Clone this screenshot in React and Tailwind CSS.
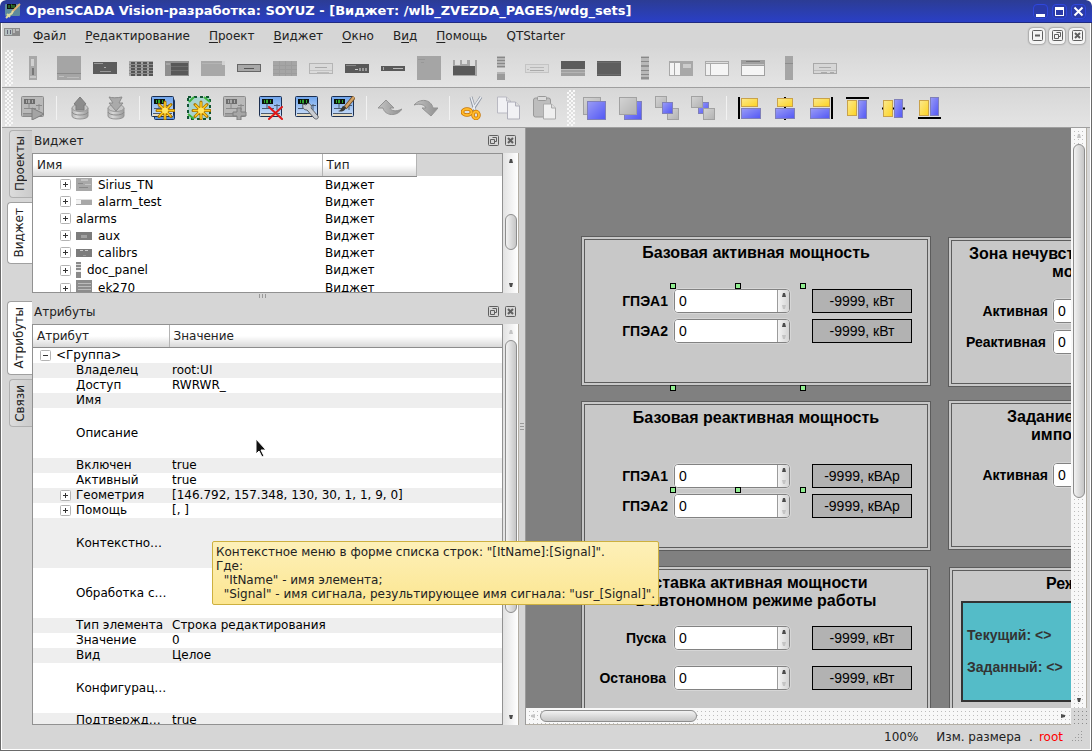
import React from "react";

const menuItems = [
  ["", "Ф", "айл"],
  ["", "Р", "едактирование"],
  ["", "П", "роект"],
  ["", "В", "иджет"],
  ["", "О", "кно"],
  ["В", "и", "д"],
  ["", "П", "омощь"],
  ["QTStarter", "", ""],
];

// Widget library previews, each drawn on a 24x24 grid: [x, y, w, h, colour]
const previews = [
  ["Стойка", [[8, 0, 8, 24, "#a8a8a8"], [10, 3, 3, 7, "#d0d0d0"], [11, 12, 2, 7, "#777"], [9, 20, 6, 2, "#c6c6c6"]]],
  ["Панель", [[0, 0, 24, 24, "#a5a5a5"], [0, 17, 24, 1, "#8a8a8a"], [2, 20, 5, 1, "#c0c0c0"], [10, 21, 12, 1, "#bbb"]]],
  ["Табло", [[0, 6, 24, 12, "#5c5c5c"], [1, 7, 9, 1, "#999"], [11, 11, 2, 1, "#aaa"], [7, 15, 11, 1, "#999"]]],
  ["Таблица", [[0, 5, 24, 15, "#a5a5a5"], [2, 6, 4, 14, "#555"], [8, 6, 4, 14, "#555"], [14, 6, 4, 14, "#555"], [20, 6, 4, 14, "#555"], [0, 8, 24, 1, "#8c8c8c"], [0, 11, 24, 1, "#8c8c8c"], [0, 14, 24, 1, "#8c8c8c"], [0, 17, 24, 1, "#8c8c8c"]]],
  ["Список", [[0, 5, 24, 15, "#8f8f8f"], [6, 7, 17, 12, "#585858"], [1, 7, 4, 2, "#a5a5a5"], [6, 10, 17, 1, "#6c6c6c"], [6, 14, 17, 1, "#6c6c6c"]]],
  ["Лист", [[0, 5, 24, 15, "#a8a8a8"], [21, 5, 3, 4, "#d2d2d2"], [1, 7, 20, 1, "#b4b4b4"]]],
  ["Кнопка", [[0, 8, 24, 8, "#666"], [1, 9, 22, 6, "#a8a8a8"], [7, 12, 10, 1, "#555"]]],
  ["Сетка", [[0, 5, 24, 15, "#a5a5a5"], [0, 9, 24, 1, "#9d9d9d"], [0, 13, 24, 1, "#9d9d9d"], [0, 17, 24, 1, "#9d9d9d"], [6, 5, 1, 15, "#9d9d9d"], [12, 5, 1, 15, "#9d9d9d"], [18, 5, 1, 15, "#9d9d9d"]]],
  ["Диалог", [[0, 7, 24, 11, "#b5b5b5"], [1, 8, 22, 9, "#dadada"], [6, 11, 12, 1, "#aaa"], [1, 14, 22, 1, "#c2c2c2"], [8, 16, 12, 1, "#bbb"]]],
  ["Строка", [[0, 8, 24, 9, "#595959"], [1, 9, 10, 1, "#888"], [10, 13, 3, 1, "#ccc"], [14, 12, 2, 3, "#999"], [17, 12, 2, 3, "#999"], [20, 12, 2, 3, "#999"]]],
  ["Индикатор", [[0, 10, 24, 5, "#595959"], [2, 11, 1, 3, "#aaa"], [12, 12, 10, 1, "#bbb"]]],
  ["Поле", [[0, 0, 24, 24, "#a5a5a5"], [1, 3, 7, 1, "#989898"], [4, 6, 3, 1, "#989898"]]],
  ["Блоки", [[0, 4, 24, 16, "#a5a5a5"], [2, 4, 5, 5, "#dcdcdc"], [9, 4, 5, 4, "#dcdcdc"], [17, 4, 5, 6, "#dcdcdc"], [0, 10, 22, 9, "#595959"]]],
  ["Шкала", [[8, 0, 8, 24, "#b4b4b4"], [8, 1, 8, 1, "#888"], [8, 4, 8, 1, "#888"], [8, 7, 8, 1, "#888"], [8, 10, 8, 1, "#888"], [8, 12, 8, 4, "#ddd"], [8, 18, 8, 6, "#9a9a9a"]]],
  ["Подпись", [[0, 8, 24, 9, "#c4c4c4"], [1, 9, 22, 7, "#dadada"], [5, 11, 14, 1, "#b8b8b8"], [5, 14, 14, 1, "#aaa"], [2, 13, 2, 1, "#bbb"]]],
  ["Лента", [[0, 5, 24, 8, "#5c5c5c"], [0, 13, 24, 1, "#bbb"], [0, 14, 24, 6, "#a0a0a0"], [0, 16, 24, 1, "#b4b4b4"]]],
  ["Экран", [[0, 5, 24, 15, "#5e5e5e"], [0, 6, 24, 1, "#6c6c6c"], [0, 18, 24, 1, "#6c6c6c"]]],
  ["Столбец", [[8, 0, 8, 24, "#b8b8b8"], [8, 1, 8, 1, "#888"], [8, 5, 8, 1, "#888"], [8, 9, 8, 2, "#909090"], [8, 14, 8, 1, "#888"], [8, 18, 8, 1, "#888"], [8, 21, 8, 2, "#909090"]]],
  ["Карточки", [[0, 5, 24, 15, "#a8a8a8"], [1, 7, 4, 12, "#f4f4f4"], [6, 7, 5, 12, "#f4f4f4"], [14, 8, 8, 4, "#ccc"]]],
  ["Окно", [[0, 5, 24, 15, "#aaa"], [1, 8, 4, 11, "#f0f0f0"], [6, 8, 17, 11, "#f5f5f5"], [1, 6, 22, 1, "#ddd"]]],
  ["Форма", [[0, 4, 24, 16, "#a0a0a0"], [5, 5, 14, 1, "#777"], [1, 8, 22, 1, "#c4c4c4"], [1, 10, 22, 9, "#f5f5f5"]]],
  ["Полоса", [[8, 0, 8, 24, "#a5a5a5"], [8, 7, 8, 1, "#8d8d8d"]]],
  ["Сообщение", [[0, 7, 24, 11, "#a8a8a8"], [1, 8, 22, 9, "#d6d6d6"], [6, 11, 12, 1, "#aaa"], [1, 14, 22, 1, "#bbb"], [8, 16, 6, 1, "#aaa"], [17, 16, 4, 1, "#aaa"]]],
];

const libraryRows = [
  { name: "Sirius_TN", w: 16, h: 13, art: [[0, 0, 16, 13, "#a8a8a8"], [5, 1, 7, 2, "#c4c4c4"], [2, 5, 5, 1, "#888"], [9, 6, 6, 1, "#c4c4c4"], [3, 9, 9, 1, "#888"]] },
  { name: "alarm_test", w: 16, h: 6, art: [[0, 0, 16, 6, "#a8a8a8"], [0, 0, 16, 1, "#ddd"], [0, 1, 5, 4, "#f2f2f2"]] },
  { name: "alarms" },
  { name: "aux", w: 16, h: 8, art: [[0, 0, 16, 8, "#7c7c7c"], [5, 3, 6, 3, "#a0a0a0"]] },
  { name: "calibrs", w: 16, h: 8, art: [[0, 0, 16, 8, "#7c7c7c"], [4, 1, 3, 1, "#ccc"], [9, 1, 3, 1, "#ccc"], [7, 6, 3, 1, "#999"]] },
  { name: "doc_panel", w: 5, h: 16, art: [[0, 0, 5, 16, "#8a8a8a"], [0, 2, 5, 1, "#ddd"], [0, 5, 5, 1, "#ddd"], [0, 8, 5, 2, "#eee"]] },
  { name: "ek270", w: 16, h: 16, art: [[0, 0, 16, 16, "#8c8c8c"], [2, 3, 13, 1, "#bbb"], [2, 6, 13, 1, "#bbb"], [2, 9, 13, 1, "#bbb"], [2, 12, 13, 1, "#bbb"]] },
];

const attributes = [
  { name: "Владелец", value: "root:UI" },
  { name: "Доступ", value: "RWRWR_" },
  { name: "Имя", value: "" },
  { name: "Описание", value: "", tall: true },
  { name: "Включен", value: "true" },
  { name: "Активный", value: "true" },
  { name: "Геометрия", value: "[146.792, 157.348, 130, 30, 1, 1, 9, 0]", expandable: true },
  { name: "Помощь", value: "[, ]", expandable: true },
  { name: "Контекстно…", value: "", tall: true },
  { name: "Обработка с…", value: "", tall: true },
  { name: "Тип элемента", value: "Строка редактирования" },
  { name: "Значение", value: "0" },
  { name: "Вид", value: "Целое" },
  { name: "Конфигурац…", value: "", tall: true },
  { name: "Подтвержд…", value: "true" },
];

const Art = ({ w = 24, h = 24, rects }) => (
  <svg width={w} height={h} viewBox={`0 0 ${w} ${h}`} shapeRendering="crispEdges" className="shrink-0">
    {rects.map(([x, y, rw, rh, fill], i) => (
      <rect key={i} x={x} y={y} width={rw} height={rh} fill={fill} />
    ))}
  </svg>
);

const Icon = ({ children }) => (
  <svg width="24" height="24" viewBox="0 0 24 24" fill="none">
    {children}
  </svg>
);

// Small mimic panel that most of the editor icons are built on
const Mimic = ({ gray }) => (
  <>
    <rect x="0.500" y="0.500" width="22" height="20" rx="1" fill={gray ? "#b9b9b9" : "url(#sky)"} stroke={gray ? "#8c8c8c" : "#1c2f50"} />
    <path d="M2 18h19v2H2z" fill={gray ? "#a0a0a0" : "#e8dcc0"} />
    <path d="M8 8v5M3 12.500h12M18 8v6M15 9.500h6M2 17.500h19" stroke={gray ? "#8a8a8a" : "#4a5a70"} />
    <rect x="3" y="3" width="11" height="5" fill={gray ? "#6d6d6d" : "#0b120b"} />
    <path d="M5.500 4v3M7.500 4h1v3h-1zM11.500 4v3" stroke={gray ? "#aaa" : "#2fa52f"} />
  </>
);

const Star = () => (
  <>
    <path d="M14 6v17M6 14.500h17M8 8.500l12 12M20 8.500l-12 12" stroke="#a87400" strokeWidth="3" strokeLinecap="round" />
    <path d="M14 6.500v16M6.500 14.500h16M8.500 9l11 11M19.500 9l-11 11" stroke="#ffc81e" strokeWidth="1.6" strokeLinecap="round" />
    <circle cx="14" cy="14.500" r="3" fill="#ffe566" />
  </>
);

const Barrel = () => (
  <>
    <path d="M4 12v8c0 4 16 4 16 0v-8" fill="url(#barrel)" stroke="#949494" />
    <ellipse cx="12" cy="12" rx="8" ry="3.500" fill="#c6c6c6" stroke="#9a9a9a" />
    <path d="M4 16c1 4 15 4 16 0" stroke="#8c8c8c" />
  </>
);

const Box = ({ x, y, w, h, kind }) => {
  const styles = {
    gray: ["url(#ash)", "#a2a2a2"],
    blue: ["url(#azure)", "#8080b8"],
    gold: ["url(#gold)", "#c9a24a"],
  };
  return <rect x={x} y={y} width={w} height={h} fill={styles[kind][0]} stroke={styles[kind][1]} />;
};

const toolGroups = [
  {
    buttons: [
      ["Запустить", <><Mimic gray /><path d="M11 12l12 6-12 6z" fill="#a4a4a4" stroke="#7d7d7d" /></>],
    ],
  },
  {
    buttons: [
      ["Загрузить из БД", <><Barrel /><path d="M12 1l6 7-2 1v5H8V9L6 8z" fill="#8c8c8c" stroke="#7c7c7c" /></>],
      ["Сохранить в БД", <><Barrel /><path d="M5 1c3 1 8 1 13 0l-3 6h4l-7 8-7-8h4z" fill="#aaaaaa" stroke="#8c8c8c" /></>],
    ],
  },
  {
    buttons: [
      ["Новая библиотека", <><rect x="3.500" y="3.500" width="20" height="20" rx="1" fill="#5d93dd" stroke="#173463" /><Mimic /><Star /></>],
      ["Новая страница", <><rect x="1" y="1" width="22" height="22" fill="#a9d3cf" stroke="#153" strokeWidth="2" strokeDasharray="3 3" /><path d="M2 6l5-5M17 1l6 5M1 18l6 5" stroke="#3db53d" strokeWidth="2" /><Star /></>],
      ["Добавить виджет", <><Mimic gray /><path d="M14 12h4v4h5v4h-5v4h-4v-4h-4v-4h4z" fill="#a6a6a6" stroke="#7e7e7e" /></>],
      ["Удалить виджет", <><Mimic /><path d="M10 11l13 12M23 11L10 23" stroke="#e01818" strokeWidth="2" strokeLinecap="round" /></>],
      ["Свойства виджета", <><Mimic /><path d="M8 8l3 1 2-2c3 1 4 3 3 5l7 8c1 3-2 4-4 2l-7-8c-3 0-5-2-4-6z" fill="#c9ccd1" stroke="#5d6268" /></>],
      ["Редактировать виджет", <><Mimic /><path d="M23 1l-9 11" stroke="#6e4a22" strokeWidth="4" /><path d="M23 1l-9 11" stroke="#d3a467" strokeWidth="2.5" /><path d="M15 11c-1 5-5 5-8 4 3 0 3-3 5-5z" fill="#3b3b35" /></>],
    ],
  },
  {
    buttons: [
      ["Отменить", <path d="M8 4L0 12h5c2 8 14 9 19 1-6 3-11 2-12-1h4z" fill="url(#steel)" stroke="#939393" />],
      ["Повторить", <path d="M17 20l7-8h-5C17 3 6 2 0 9c6-2 11 0 12 3H8z" fill="url(#steel)" stroke="#939393" />],
    ],
  },
  {
    buttons: [
      ["Вырезать", <>
        <path d="M10 1l4 14M20 1l-9 14" stroke="#8b93a0" strokeWidth="3" />
        <path d="M10 1l4 13M20 1l-9 13" stroke="#e8ebf0" strokeWidth="1.5" />
        <ellipse cx="6" cy="16" rx="4.500" ry="3" stroke="#c87400" strokeWidth="3.500" />
        <ellipse cx="15" cy="19" rx="3" ry="3.500" stroke="#c87400" strokeWidth="3.500" />
        <ellipse cx="6" cy="16" rx="4.500" ry="3" stroke="#ffb92a" strokeWidth="2" />
        <ellipse cx="15" cy="19" rx="3" ry="3.500" stroke="#ffb92a" strokeWidth="2" />
      </>],
      ["Копировать", <>
        <path d="M0.500 1h9l4 4v12h-13z" fill="#f1f1f4" stroke="#b9b9c2" /><path d="M9.500 1v4h4" fill="#ddd" stroke="#b9b9c2" />
        <path d="M10.500 6h8l4 4v13h-12z" fill="#f1f1f4" stroke="#b0b0bb" /><path d="M18.500 6v4h4" fill="#ddd" stroke="#b0b0bb" />
      </>],
      ["Вставить", <>
        <rect x="0.500" y="2" width="17" height="19" rx="2" fill="#bdbdbd" stroke="#999" /><rect x="4.500" y="0.500" width="9" height="4" rx="1" fill="#dcdcdc" stroke="#999" />
        <path d="M10.500 8h8l4 4v11h-12z" fill="#efefef" stroke="#aaa" /><path d="M18.500 8v4h4" fill="#ddd" stroke="#aaa" />
      </>],
    ],
  },
  {
    handle: true,
    buttons: [
      ["Поднять наверх", <><Box x="0.5" y="1.5" w="17" h="17" kind="gray" /><Box x="4.5" y="5.5" w="18" h="18" kind="blue" /></>],
      ["Опустить вниз", <><Box x="5.5" y="5.5" w="17" h="18" kind="blue" /><Box x="0.5" y="1.5" w="17" h="17" kind="gray" /></>],
      ["Поднять", <><Box x="0.5" y="0.5" w="11" h="11" kind="gray" /><Box x="12.5" y="12.5" w="11" h="11" kind="gray" /><Box x="7.5" y="6.5" w="10" h="11" kind="blue" /></>],
      ["Опустить", <><Box x="7.5" y="6.5" w="10" h="11" kind="blue" /><Box x="0.5" y="0.5" w="11" h="11" kind="gray" /><Box x="12.5" y="12.5" w="11" h="11" kind="gray" /></>],
    ],
  },
  {
    buttons: [
      ["По левому краю", <><path d="M1 1v22" stroke="#000" strokeWidth="2" /><Box x="3.5" y="2.5" w="16" h="8" kind="gold" /><Box x="3.5" y="12.5" w="19" h="10" kind="blue" /></>],
      ["По центру вертикально", <><path d="M11 1v23" stroke="#000" strokeWidth="2" /><Box x="3.5" y="2.5" w="15" h="8" kind="gold" /><Box x="1.5" y="12.5" w="19" h="10" kind="blue" /></>],
      ["По правому краю", <><path d="M22 1v22" stroke="#000" strokeWidth="2" /><Box x="3.5" y="2.5" w="16" h="8" kind="gold" /><Box x="0.5" y="12.5" w="19" h="10" kind="blue" /></>],
      ["По верхнему краю", <><path d="M0 2h23" stroke="#000" strokeWidth="2" /><Box x="1.5" y="4.5" w="9" h="15" kind="gold" /><Box x="12.5" y="4.5" w="8" h="18" kind="blue" /></>],
      ["По центру горизонтально", <><path d="M0 12.500h23" stroke="#000" strokeWidth="2" /><Box x="1.5" y="4.5" w="9" h="16" kind="gold" /><Box x="12.5" y="3.5" w="8" h="18" kind="blue" /></>],
      ["По нижнему краю", <><path d="M0 22h23" stroke="#000" strokeWidth="2" /><Box x="1.5" y="4.5" w="9" h="15" kind="gold" /><Box x="12.5" y="1.5" w="8" h="18" kind="blue" /></>],
    ],
  },
];

// Gradients shared by the toolbar icons
const Gradients = () => (
  <svg width="0" height="0" className="absolute">
    <defs>
      <linearGradient id="sky" x1="0" y1="0" x2="0" y2="1"><stop offset="0" stopColor="#6ea4ec" /><stop offset="1" stopColor="#cfe0f8" /></linearGradient>
      <linearGradient id="steel" x1="0" y1="0" x2="1" y2="0"><stop offset="0" stopColor="#c4c4c4" /><stop offset="1" stopColor="#8f8f8f" /></linearGradient>
      <linearGradient id="barrel" x1="0" y1="0" x2="1" y2="0"><stop offset="0" stopColor="#b4b4b4" /><stop offset="0.3" stopColor="#d8d8d8" /><stop offset="1" stopColor="#9c9c9c" /></linearGradient>
      <linearGradient id="ash" x1="0" y1="0" x2="1" y2="1"><stop offset="0" stopColor="#d4d4d4" /><stop offset="1" stopColor="#b2b2b2" /></linearGradient>
      <linearGradient id="azure" x1="0" y1="0" x2="1" y2="1"><stop offset="0" stopColor="#9a9cf5" /><stop offset="1" stopColor="#5257f5" /></linearGradient>
      <linearGradient id="gold" x1="0" y1="0" x2="1" y2="1"><stop offset="0" stopColor="#fbe98f" /><stop offset="1" stopColor="#fdd321" /></linearGradient>
    </defs>
  </svg>
);

const Grip = () => (
  <div className="mr-0.5 ml-[3px] h-9 w-2 shrink-0 bg-[repeating-conic-gradient(#f8f8f8_0_25%,transparent_0_50%)] bg-[size:4px_4px]" />
);

const TitleBar = () => (
  <header className="flex h-[23px] shrink-0 items-center rounded-t-md border-b border-[#1f2a80] bg-linear-to-b from-[#2c3c94] to-[#2a3fc6] pr-1.5 pl-[5px] text-white">
    <svg width="16" height="16" viewBox="0 0 16 16" fill="none">
      <rect x="0" y="1" width="15" height="12" rx="1" fill="#5d8a9c" />
      <rect x="2" y="1" width="9" height="5" fill="#111" />
      <path d="M4 2v3M6 2h1v3M9 2v3" stroke="#3fae3f" />
      <path d="M15 1L7 9" stroke="#e0b070" strokeWidth="2" />
      <path d="M8 8c-1 4-3 3-4 4l-3 3M2 11l3 3" stroke="#dcd9a0" strokeWidth="2" />
    </svg>
    <h1 className="ml-[5px] flex-1 truncate text-[13px] leading-5 font-bold">
      OpenSCADA Vision-разработка: SOYUZ - [Виджет: /wlb_ZVEZDA_PAGES/wdg_sets]
    </h1>
    <div className="flex gap-1">
      {["M3 10h9v3H3z", "M3 3h9v9H3zM4 6v5h7V6z"].map((d, i) => (
        <button key={d} aria-label={i ? "Развернуть" : "Свернуть"} className="rounded-sm bg-[#2a3aa8] outline -outline-offset-1 outline-[#2f47dd]">
          <svg width="15" height="15" viewBox="0 0 15 15"><path d={d} fill="#fff" fillRule="evenodd" /></svg>
        </button>
      ))}
      <button aria-label="Закрыть" className="rounded-sm bg-[#2a3aa8] outline -outline-offset-1 outline-[#2f47dd]">
        <svg width="15" height="15" viewBox="0 0 15 15"><path d="M3.500 3.500l8 8M11.500 3.500l-8 8" stroke="#fff" strokeWidth="2" /></svg>
      </button>
    </div>
  </header>
);

const glyphs = {
  minimize: "M3 5.500h5",
  restore: "M4.500 2.500h4v4h-2M2.500 4.500h4v4h-4z",
  close: "M3 3l5 5M8 3l-5 5",
};

const FrameGlyph = ({ kind }) => (
  <svg width="11" height="11" viewBox="0 0 11 11" fill="none" stroke="#5f5f5f">
    <rect x="0.500" y="0.500" width="10" height="10" rx="1" />
    <path d={glyphs[kind]} strokeWidth={kind === "restore" ? 1 : 2} />
  </svg>
);

const MenuBar = () => (
  <nav className="flex h-[25px] shrink-0 items-center pr-[5px] pl-0.5">
    <div className="pb-2">
      <Art w={16} h={8} rects={[[0, 0, 16, 8, "#8c8c8c"], [1, 1, 7, 6, "#b4c0c0"], [3, 2, 1, 4, "#667"], [6, 2, 1, 4, "#667"], [9, 1, 2, 4, "#bbb"], [12, 1, 3, 2, "#bbb"]]} />
    </div>
    <ul className="ml-[13px] flex flex-1 gap-[19px]">
      {menuItems.map(([before, key, after]) => (
        <li key={before + key + after}>
          <button className="leading-4">
            {before}
            <u className="underline-offset-2">{key}</u>
            {after}
          </button>
        </li>
      ))}
    </ul>
    <div className="flex gap-1">
      {[["minimize", "Свернуть окно"], ["restore", "Восстановить окно"], ["close", "Закрыть окно"]].map(([kind, label]) => (
        <button key={kind} aria-label={label} className="flex size-4 items-center justify-center rounded bg-[#f4f4f4] shadow-[0_0_2px_#444]">
          <FrameGlyph kind={kind} />
        </button>
      ))}
    </div>
  </nav>
);

const WidgetToolbar = () => (
  <div className="flex h-10 shrink-0 items-center border-b border-[#9f9f9f] bg-linear-to-b from-[#d7d7d7] to-[#e4e4e4]">
    <Grip />
    {previews.map(([label, rects]) => (
      <button key={label} aria-label={label} className="flex h-9 w-9 shrink-0 items-center justify-center">
        <Art rects={rects} />
      </button>
    ))}
  </div>
);

const EditToolbar = () => (
  <div className="flex h-10 shrink-0 items-center border-b border-[#9f9f9f] bg-linear-to-b from-[#d7d7d7] to-[#e4e4e4]">
    <Grip />
    {toolGroups.map((group, i) => (
      <React.Fragment key={i}>
        {i > 0 && !group.handle && <div className="mx-[5px] h-6 w-px shrink-0 bg-[#f2f2f2]" />}
        {group.handle && <div className="flex w-[14px] shrink-0 justify-center"><Grip /></div>}
        {group.buttons.map(([label, icon]) => (
          <button key={label} aria-label={label} className="flex h-9 w-9 shrink-0 items-center justify-center">
            <Icon>{icon}</Icon>
          </button>
        ))}
      </React.Fragment>
    ))}
  </div>
);

const Arrow = ({ dir, faint }) => {
  const d = { up: "M0 4h4L3 0H1z", down: "M0 0h4L3 4H1z", left: "M4 0v4L0 3V1z", right: "M0 0v4l4-1V1z" }[dir];
  return (
    <svg width="4" height="4" viewBox="0 0 4 4" className="shrink-0">
      <path d={d} fill={faint ? "#c4c4c4" : "#4c4c4c"} />
    </svg>
  );
};

const VScroll = ({ spacer, thumb, className, faint }) => (
  <div className={`flex w-4 shrink-0 flex-col items-center border-r border-[#b3aea4] ${className}`}>
    <div className="flex h-4 shrink-0 items-center"><Arrow dir="up" faint={faint} /></div>
    <div className={spacer} />
    <div className={`w-3 shrink-0 rounded-full border border-[#8d8d8d] bg-linear-to-r from-[#f2f2f2] to-[#c6c6c6] ${thumb}`} />
    <div className="flex-1" />
    <div className="flex h-4 shrink-0 items-center"><Arrow dir="down" /></div>
  </div>
);

const SideTab = ({ active, className, children }) => (
  <button
    className={`flex items-center justify-center rounded-l border border-r-0 pr-[3px] leading-4 ${
      active ? "w-[25px] border-[#a0a0a0] bg-white" : "w-[23px] border-[#b0b0b0] bg-linear-to-r from-[#dcdcdc] to-[#cbcbcb]"
    } ${className}`}
  >
    <span className="rotate-180 [writing-mode:vertical-rl]">{children}</span>
  </button>
);

const DockTitle = ({ children }) => (
  <div className="flex h-[25px] shrink-0 items-center pr-[3px] pl-[2px]">
    <h2 className="flex-1">{children}</h2>
    <button aria-label="Открепить" className="mr-1.5"><FrameGlyph kind="restore" /></button>
    <button aria-label="Закрыть панель"><FrameGlyph kind="close" /></button>
  </div>
);

const Expander = ({ open }) => (
  <svg width="11" height="11" viewBox="0 0 11 11" fill="none" className="shrink-0">
    <rect x="0.500" y="0.500" width="10" height="10" rx="1" fill="#fff" stroke="#b4b4b4" />
    <path d={open ? "M3 5.500h5" : "M3 5.500h5M5.500 3v5"} stroke="#333" />
  </svg>
);

const headCell = "border-b border-[#8c8c8c] bg-linear-to-b from-white from-50% to-[#d8d8d8] pl-1 text-left font-normal";

const LibraryDock = () => (
  <section className="flex h-[165px] shrink-0">
    <div className="flex w-[27px] flex-col items-end gap-1 pt-0.5">
      <SideTab className="h-[68px]">Проекты</SideTab>
      <SideTab active className="h-[62px]">Виджет</SideTab>
    </div>
    <div className="flex min-w-0 flex-1 flex-col">
      <DockTitle>Виджет</DockTitle>
      <div className="flex min-h-0 flex-1">
        <div className="min-w-0 flex-1 overflow-hidden border border-[#919191] bg-white text-black">
          <table className="w-full table-fixed border-collapse">
            <thead>
              <tr className="h-[22px] text-[#222]">
                <th className={`w-[289px] border-r border-r-[#b4b4b4] ${headCell}`}>Имя</th>
                <th className={`w-[94px] border-r border-r-[#b4b4b4] ${headCell}`}>Тип</th>
                <td className="bg-[#d6d6d6]" />
              </tr>
            </thead>
            <tbody>
              {libraryRows.map((row) => (
                <tr key={row.name} className={row.h === 16 ? "h-[18px]" : "h-[17px]"}>
                  <td className="p-0 pl-[27px]">
                    <div className="flex items-center">
                      <Expander />
                      <span className="w-[5px]" />
                      {row.art && <Art w={row.w} h={row.h} rects={row.art} />}
                      {row.art && <span className="w-1.5" />}
                      {row.name}
                    </div>
                  </td>
                  <td className="p-0 pl-[3px]">Виджет</td>
                </tr>
              ))}
            </tbody>
          </table>
        </div>
        <VScroll className="bg-linear-to-r from-[#e2e2e2] to-white" spacer="h-[45px]" thumb="h-9" />
      </div>
    </div>
  </section>
);

const AttributeDock = () => (
  <section className="flex min-h-0 flex-1">
    <div className="flex w-[27px] flex-col items-end gap-1 pt-0.5">
      <SideTab active className="h-[74px]">Атрибуты</SideTab>
      <SideTab className="h-12">Связи</SideTab>
    </div>
    <div className="flex min-w-0 flex-1 flex-col">
      <DockTitle>Атрибуты</DockTitle>
      <div className="flex min-h-0 flex-1">
        <div className="min-w-0 flex-1 overflow-hidden border border-[#919191] bg-white text-black">
          <table className="w-full table-fixed border-collapse">
            <thead>
              <tr className="h-[22px] text-[#222]">
                <th className={`w-[136px] border-r border-r-[#b4b4b4] ${headCell}`}>Атрибут</th>
                <th className={headCell}>Значение</th>
              </tr>
            </thead>
            <tbody className="leading-[15px]">
              <tr className="h-[15px]">
                <td colSpan="2" className="p-0 pl-[7px]">
                  <div className="flex items-center gap-[5px]">
                    <Expander open />
                    {"<Группа>"}
                  </div>
                </td>
              </tr>
              {attributes.map((attr) => (
                <tr key={attr.name} className={`odd:bg-white even:bg-[#eeeeee] ${attr.tall ? "h-[50px]" : "h-[15px]"}`}>
                  <td className={`${attr.expandable ? "pl-[27px]" : "pl-[43px]"} ${attr.tall ? "pt-0.5" : ""}`}>
                    <div className="flex items-center gap-[5px] whitespace-nowrap">
                      {attr.expandable && <Expander />}
                      {attr.name}
                    </div>
                  </td>
                  <td className="p-0 pl-[3px] whitespace-nowrap">{attr.value}</td>
                </tr>
              ))}
            </tbody>
          </table>
        </div>
        <VScroll className="bg-linear-to-r from-[#e2e2e2] to-white" spacer="h-0" thumb="h-[273px]" faint />
      </div>
    </div>
  </section>
);

const Spin = ({ id }) => (
  <div className="flex h-6 w-[116px] shrink-0 overflow-hidden rounded border border-[#828282] bg-white outline outline-[#d6d6d6]">
    <input id={id} defaultValue="0" className="w-full min-w-0 flex-1 bg-white pl-1 text-sm text-black outline-none" />
    <div className="flex w-3 flex-col items-center justify-between border-l border-[#9c9c9c] bg-linear-to-r from-[#f4f4f4] to-[#d4d4d4] py-[3px]">
      <button aria-label="Больше"><Arrow dir="up" /></button>
      <button aria-label="Меньше"><Arrow dir="down" faint /></button>
    </div>
  </div>
);

const Field = ({ id, label, unit, labelClass }) => (
  <div className="flex items-center">
    <label htmlFor={id} className={`shrink-0 text-right font-bold ${labelClass}`}>{label}</label>
    <Spin id={id} />
    {unit && (
      <output className="ml-[22px] h-6 w-[100px] shrink-0 border border-black bg-[#b2b2b2] text-center leading-[22px]">
        -9999, {unit}
      </output>
    )}
  </div>
);

// A frame widget, placed on the page by its own geometry
const Group = ({ place, children }) => (
  <section className={`absolute h-[150px] w-[350px] border-4 border-double border-[#5c5c5c] bg-[#c8c8c8] pt-1 ${place}`}>
    {children}
  </section>
);

const heading = "text-base leading-[18px] font-bold whitespace-nowrap";

const handles = [
  "left-[144px] top-[155px]",
  "left-[209px] top-[155px]",
  "left-[274px] top-[155px]",
  "left-[144px] top-[257px]",
  "left-[274px] top-[257px]",
  "left-[144px] top-[359px]",
  "left-[209px] top-[359px]",
  "left-[274px] top-[359px]",
];

const Canvas = () => (
  <div className="relative min-w-0 flex-1 overflow-hidden bg-[#808080] font-['Liberation_Sans',Arial,sans-serif] text-sm text-black">
    <Group place="left-[55px] top-[108px]">
      <h3 className={`text-center ${heading}`}>Базовая активная мощность</h3>
      <div className="mt-[27px] flex flex-col gap-1.5">
        <Field id="p1" label="ГПЭА1" unit="кВт" labelClass="w-[83px] mr-1.5" />
        <Field id="p2" label="ГПЭА2" unit="кВт" labelClass="w-[83px] mr-1.5" />
      </div>
    </Group>
    <Group place="left-[55px] top-[273px]">
      <h3 className={`text-center ${heading}`}>Базовая реактивная мощность</h3>
      <div className="mt-[37px] flex flex-col gap-1.5">
        <Field id="q1" label="ГПЭА1" unit="кВАр" labelClass="w-[83px] mr-1.5" />
        <Field id="q2" label="ГПЭА2" unit="кВАр" labelClass="w-[83px] mr-1.5" />
      </div>
    </Group>
    <Group place="left-[55px] top-[438px]">
      <h3 className={`text-center ${heading}`}>
        Уставка активная мощности
        <br />в автономном режиме работы
      </h3>
      <div className="mt-4 flex flex-col gap-4">
        <Field id="start" label="Пуска" unit="кВт" labelClass="w-[81px] mr-2" />
        <Field id="stop" label="Останова" unit="кВт" labelClass="w-[81px] mr-2" />
      </div>
    </Group>
    <Group place="left-[422px] top-[109px]">
      <h3 className={heading}>
        <span className="block pl-[17px]">Зона нечувст</span>
        <span className="block pl-[100px]">мо</span>
      </h3>
      <div className="mt-[18px] flex flex-col gap-[7px]">
        <Field id="zone-p" label="Активная" labelClass="w-24 mr-[5px]" />
        <Field id="zone-q" label="Реактивная" labelClass="w-[94px] mr-[7px]" />
      </div>
    </Group>
    <Group place="left-[422px] top-[272px]">
      <h3 className={heading}>
        <span className="block pl-[55px]">Задание</span>
        <span className="block pl-[79px]">импо</span>
      </h3>
      <div className="mt-[19px]">
        <Field id="import-p" label="Активная" labelClass="w-24 mr-[5px]" />
      </div>
    </Group>
    <Group place="left-[423px] top-[439px]">
      <h3 className={`pl-[93px] ${heading}`}>Реж</h3>
      <div className="mt-2 ml-2 flex h-[101px] flex-col justify-center gap-4 border-2 border-[#333] bg-[#54bcc8] pb-0.5 pl-1 leading-4 font-bold text-[#333]">
        <p>Текущий: {"<>"}</p>
        <p>Заданный: {"<>"}</p>
      </div>
    </Group>
    {handles.map((place) => (
      <span key={place} className={`absolute size-1.5 border border-black bg-[#90ee90] ${place}`} />
    ))}
  </div>
);

const dots = "bg-[#f8f8f8] bg-[conic-gradient(from_90deg_at_3px_3px,#bdbdbd_25%,transparent_0)] bg-[size:4px_4px]";

const Workspace = () => (
  <main className="flex min-w-0 flex-1 flex-col">
    <div className="flex min-h-0 flex-1">
      <Canvas />
      <VScroll className={dots} spacer="h-0" thumb="h-[354px]" faint />
    </div>
    <div className="flex h-[17px] shrink-0">
      <div className={`flex min-w-0 flex-1 items-center border-b border-[#b3aea4] ${dots}`}>
        <div className="flex w-[14px] justify-center"><Arrow dir="left" faint /></div>
        <div className="h-3 w-[157px] rounded-full border border-[#8d8d8d] bg-linear-to-b from-[#f2f2f2] to-[#c6c6c6]" />
        <div className="flex-1" />
        <div className="flex w-4 justify-center"><Arrow dir="right" /></div>
      </div>
      <div className="w-4 bg-[#d6d6d6] bg-[conic-gradient(from_90deg_at_3px_3px,#8c8c8c_25%,transparent_0)] bg-[size:4px_4px]" />
    </div>
  </main>
);

const StatusBar = () => (
  <footer className="flex h-6 shrink-0 items-center justify-end pr-[5px]">
    <span className="mr-[18px]">100%</span>
    <span className="mr-2">Изм. размера</span>
    <span className="mr-1.5">.</span>
    <span className="text-[#ff0000]">root</span>
    <svg width="14" height="14" viewBox="0 0 14 14" className="ml-2" shapeRendering="crispEdges">
      <path d="M10 1h1v1h-1zM7 4h1v1H7zM10 4h1v1h-1zM4 7h1v1H4zM7 7h1v1H7zM10 7h1v1h-1zM1 10h1v1H1zM4 10h1v1H4zM7 10h1v1H7zM10 10h1v1h-1z" fill="#999" />
    </svg>
  </footer>
);

const App = () => {
  return (
    <div className="relative flex h-screen flex-col overflow-hidden rounded-t-md bg-[#d6d6d6] font-['DejaVu_Sans',sans-serif] text-xs text-[#222]">
      <Gradients />
      <TitleBar />
      <div className="flex min-h-0 flex-1 flex-col border-x border-b border-[#6a6a6a]">
        <div className="flex min-h-0 flex-1 flex-col border-x border-b border-white">
          <MenuBar />
          <WidgetToolbar />
          <EditToolbar />
          <div className="flex min-h-0 flex-1 pr-[3px] pl-[3px]">
            <div className="flex w-[514px] shrink-0 flex-col">
              <LibraryDock />
              <div className="flex h-1.5 shrink-0 items-center justify-center gap-0.5">
                <i className="h-1 w-px bg-[#999]" />
                <i className="h-1 w-px bg-[#999]" />
                <i className="h-1 w-px bg-[#999]" />
              </div>
              <AttributeDock />
            </div>
            <div className="flex w-[7px] shrink-0 flex-col items-center justify-center gap-0.5 border-r border-[#9a9a9a]">
              <i className="h-px w-1 bg-[#999]" />
              <i className="h-px w-1 bg-[#999]" />
              <i className="h-px w-1 bg-[#999]" />
            </div>
            <Workspace />
          </div>
          <StatusBar />
        </div>
      </div>

      <div role="tooltip" className="absolute top-[541px] left-[212px] rounded-xs border border-[#cdb03f] bg-linear-to-b from-[#fdf0b8] to-[#fce691] p-[3px] leading-[14px] whitespace-pre">
        <p>{'Контекстное меню в форме списка строк: "[ItName]:[Signal]".'}</p>
        <p>Где:</p>
        <p>{'  "ItName" - имя элемента;'}</p>
        <p>{'  "Signal" - имя сигнала, результирующее имя сигнала: "usr_[Signal]".'}</p>
      </div>

      <svg width="13" height="20" viewBox="0 0 13 20" className="absolute top-[438px] left-[255px]">
        <path d="M1 1v15l3-3 3 6 2-1-3-6h5z" fill="#111" stroke="#fff" />
      </svg>
    </div>
  );
};

export default App;
